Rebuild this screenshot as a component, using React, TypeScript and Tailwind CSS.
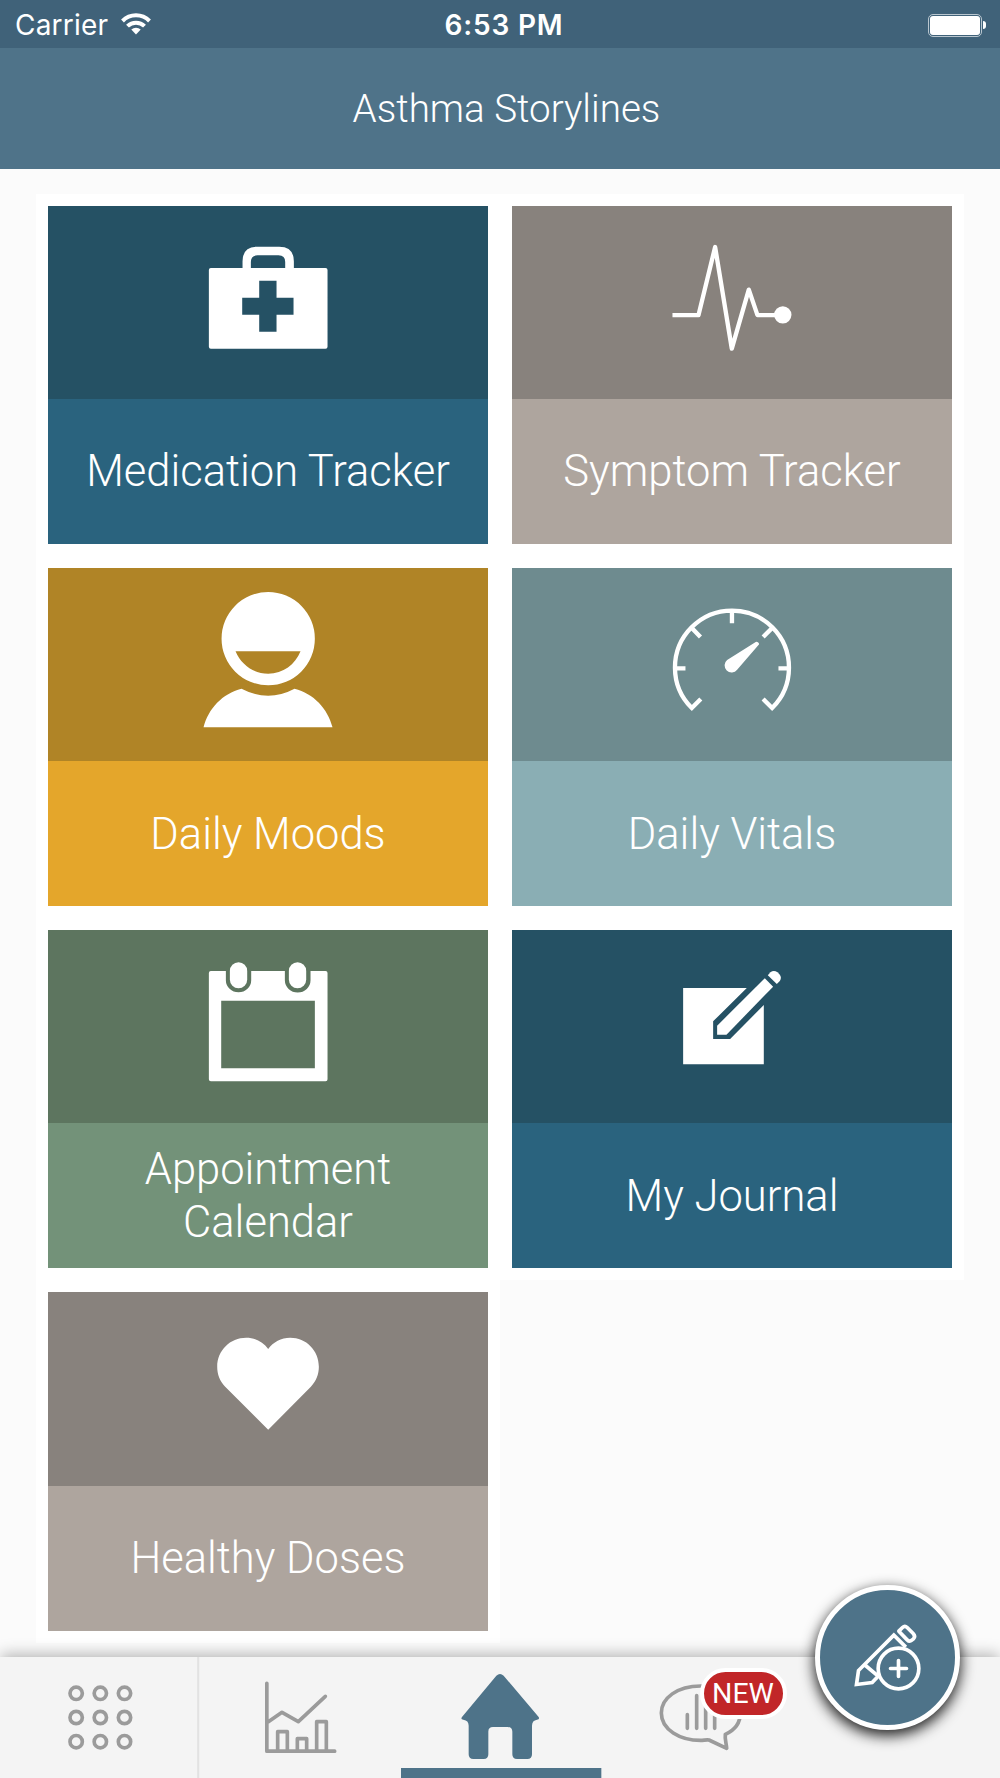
import { type FC, type ReactNode } from "react"
import clsx from "clsx"

const MedkitIcon = () => (
    <svg className="h-full w-[180px]" viewBox="-5.6 -44 540 579.6" fill="white">
        <path
            fillRule="evenodd"
            d="M92 142H188V122Q188 78 232 78H298Q342 78 342 122V142H437Q443 142 443 148V378Q443 384 437 384H93Q87 384 87 378V148Q87 142 93 142ZM213 142H316V124Q316 104 296 104H233Q213 104 213 124ZM238 180V231H187V282H238V333H290V282H341V231H290V180Z"
        />
    </svg>
)

const PulseIcon = () => (
    <svg className="h-full w-[180px]" viewBox="5.6 -44 540 579.6" fill="none">
        <path
            d="M97 283.500H175L225 79L275 384L326 207L352 283.500H428"
            stroke="white"
            strokeWidth="13"
            strokeLinejoin="round"
        />
        <circle cx="428" cy="282.500" r="26" fill="white" />
    </svg>
)

const MoodIcon = () => (
    <svg className="h-full w-[180px]" viewBox="-5.6 -7 540 579.6" fill="white">
        <path
            fillRule="evenodd"
            d="M265 65A140 140 0 0 1 265 345A140 140 0 0 1 265 65ZM167 243C184 283 220 310 265 310S346 283 362 243Z"
        />
        <path d="M185 355Q265 397 344 355C401 369 444 415 458 471H71C85 415 128 369 185 355Z" />
    </svg>
)

const GaugeIcon = () => (
    <svg className="h-full w-[180px]" viewBox="5.6 -37 540 579.6" fill="none">
        <path
            d="M182 356L155 383A171 171 0 1 1 396 383L369 356M104 264H136M446 264H415M275.500 93V129M155 143L181 170M396 143L369 170"
            stroke="white"
            strokeWidth="13"
        />
        <path
            d="M348 184L261 239A21 21 0 1 0 291 268L357 192Q356 184 348 184Z"
            fill="white"
        />
    </svg>
)

const CalendarIcon = () => (
    <svg className="h-full w-[180px]" viewBox="-5.6 -30 540 579.6" fill="white">
        <path
            fillRule="evenodd"
            d="M93 93H138V121A38 36 0 0 0 214 121V93H315V121A38 36 0 0 0 392 121V93H437Q443 93 443 99V418Q443 424 437 424H93Q87 424 87 418V99Q87 93 93 93ZM124 182V385H405V182Z"
        />
        <rect x="150" y="67" width="52" height="78" rx="26" />
        <rect x="327" y="67" width="52" height="78" rx="26" />
    </svg>
)

const JournalIcon = () => (
    <svg className="h-full w-[180px]" viewBox="-24.4 -60 540 579.6" fill="white">
        <path d="M99 114H290L189 214V267H240L341 165V343H99Z" />
        <path d="M344 85L369 110L229 254H201V227Z" />
        <path d="M353 76L361 67Q371 59 382 67L388 73Q396 83 389 93L380 102Z" />
    </svg>
)

const HeartIcon = () => (
    <svg className="h-full w-[180px]" viewBox="-5.6 -53 540 579.6" fill="white">
        <path d="M265 360L136 231C120 214 112 194 112 171C112 122 151 84 199 84C226 84 250 97 265 118C280 97 304 84 331 84C379 84 417 122 417 171C417 194 409 214 393 231Z" />
    </svg>
)

interface TileProps {
    label: ReactNode
    top: string
    bottom: string
    icon: ReactNode
}

const tiles: TileProps[] = [
    { label: "Medication Tracker", top: "bg-[#255164]", bottom: "bg-[#2a637e]", icon: <MedkitIcon /> },
    { label: "Symptom Tracker", top: "bg-[#88827d]", bottom: "bg-[#aea59e]", icon: <PulseIcon /> },
    { label: "Daily Moods", top: "bg-[#b08426]", bottom: "bg-[#e4a62b]", icon: <MoodIcon /> },
    { label: "Daily Vitals", top: "bg-[#6e8b8f]", bottom: "bg-[#8aaeb4]", icon: <GaugeIcon /> },
    {
        label: (
            <>
                Appointment
                <br />
                Calendar
            </>
        ),
        top: "bg-[#5d755f]",
        bottom: "bg-[#739279]",
        icon: <CalendarIcon />,
    },
    { label: "My Journal", top: "bg-[#255164]", bottom: "bg-[#2a637e]", icon: <JournalIcon /> },
    { label: "Healthy Doses", top: "bg-[#88827d]", bottom: "bg-[#aea59e]", icon: <HeartIcon /> },
]

const Tile: FC<TileProps> = ({ label, top, bottom, icon }) => (
    <div className="h-[362.3px] bg-white p-[12.1px]">
        <div className={clsx("flex h-[193.2px] justify-center", top)}>{icon}</div>
        <div
            className={clsx(
                "flex h-[144.9px] items-center justify-center pt-px text-center text-[43.5px] leading-[53px] font-light text-white",
                bottom
            )}
        >
            <span>{label}</span>
        </div>
    </div>
)

const StatusBar = () => (
    <div className="grid h-[48px] grid-cols-3 items-center bg-[#406279] px-[15px] pt-[2px] font-['Inter',sans-serif] text-[28px] text-white">
        <div className="flex items-center gap-[13px]">
            <span className="tracking-[0.2px]">Carrier</span>
            <svg className="mb-[2px] h-[22px] w-[30px]" viewBox="0 0 30 22" fill="none" stroke="white" strokeWidth="4">
                <path d="M1.500 8A19 19 0 0 1 28.500 8M6.500 13.200A12 12 0 0 1 23.500 13.200" />
                <path d="M15 21.500L10.300 16.600A7 7 0 0 1 19.700 16.600Z" fill="white" stroke="none" />
            </svg>
        </div>
        <span className="pl-[8px] text-center font-semibold tracking-[0.8px]">6:53 PM</span>
        <div className="mr-[-1px] flex items-center justify-end">
            <div className="h-[23px] w-[54px] rounded-[5px] border border-[#b9c6cf] p-px">
                <div className="h-full rounded-[3px] bg-white" />
            </div>
            <div className="ml-px h-[8px] w-[3px] rounded-r-full bg-white" />
        </div>
    </div>
)

const Tab: FC<{ viewBox: string; children?: ReactNode }> = ({ viewBox, children }) => (
    <svg
        className="h-[121px] w-[200px] shrink-0 overflow-visible"
        viewBox={viewBox}
        fill="none"
        stroke="#9b9b9b"
        strokeWidth="11"
        strokeLinecap="round"
        strokeLinejoin="round"
    >
        {children}
    </svg>
)

const TabBar = () => (
    <nav className="relative flex h-[121px] shrink-0 bg-[#f4f4f4] shadow-[0_-4px_14px_-1px_rgba(0,0,0,0.28)]">
        <Tab viewBox="0 111 600 363">
            {[220, 292.5, 365].map((y) =>
                [228.5, 301, 373.5].map((x) => <circle key={`${x}-${y}`} cx={x} cy={y} r="18.500" />)
            )}
            <path d="M594.500 111V474" stroke="#e2e2e2" strokeWidth="6" strokeLinecap="butt" />
        </Tab>
        <Tab viewBox="600 111 600 363">
            <path d="M800.500 190V393.500H1004M803 307L846 277L895 305L976 229M833 393V335H862V393M892 393V356H920V393M950 393V305H979V393" />
        </Tab>
        <Tab viewBox="60 111 600 363">
            <path
                d="M349 167Q360 157 371 167L476 291Q480 298 471 299Q456 301 456 317V403Q456 417 442 417H411Q397 417 397 403V335Q397 321 383 321H339Q325 321 325 335V403Q325 417 311 417H280Q266 417 266 403V317Q266 301 250 299Q241 298 246 291Z"
                fill="#4e7389"
                stroke="none"
            />
            <path d="M63 444H664V480H63Z" fill="#4e7389" stroke="none" />
        </Tab>
        <div className="relative">
            <Tab viewBox="-60 291 600 363">
                <path d="M242 378C172 378 124 414 124 459C124 509 180 541 242 541C251 541 259 539 267 540L320 565C319 550 314 537 316 523C347 509 361 485 361 459C361 414 310 378 242 378ZM202 464V505M230 407V505M257 440V505M284 440V505" />
            </Tab>
            <span className="absolute top-[11px] left-[99.5px] flex h-[51px] w-[87px] items-center justify-center rounded-full border-[4.500px] border-white bg-[#c12628] pt-[2px] text-[28.500px] text-white">
                NEW
            </span>
        </div>
        <Tab viewBox="540 291 600 363">
            <circle cx="640" cy="434" r="2" stroke="#dddddd" strokeWidth="5" />
        </Tab>
        <button className="absolute -top-[72.5px] left-[815px] size-[145px] rounded-full border-[5px] border-white bg-[#4e7389] shadow-[0_5px_14px_1px_rgba(0,0,0,0.85)]">
            <svg
                className="size-full"
                viewBox="601.500 88.500 405 405"
                fill="none"
                stroke="white"
                strokeWidth="11"
                strokeLinejoin="round"
                strokeLinecap="round"
            >
                <path
                    d="M776 347L758 366L711 372L717 330L823 224L859 260M738 315L776 347"
                    strokeLinejoin="miter"
                    strokeLinecap="butt"
                />
                <path d="M838 212L849 201Q856 194 863 201L881 219Q889 227 882 235L877 239Q870 245 863 238Z" />
                <circle cx="837" cy="324" r="61" />
                <path d="M837 300V348M813 324H861" />
            </svg>
        </button>
    </nav>
)

const App = () => {
    return (
        <div className="flex h-[1778px] w-[1000px] flex-col overflow-hidden bg-[#fbfbfb] font-['Roboto',sans-serif]">
            <StatusBar />
            <header className="flex h-[121px] shrink-0 items-center justify-center bg-[#4f7389] pl-[13px] text-[38.6px] font-light text-white">
                Asthma Storylines
            </header>
            <main className="grid h-[1488px] grid-cols-2 content-start px-[36px] pt-[24.5px]">
                {tiles.map((tile, i) => (
                    <Tile key={i} {...tile} />
                ))}
            </main>
            <TabBar />
        </div>
    )
}

export default App
